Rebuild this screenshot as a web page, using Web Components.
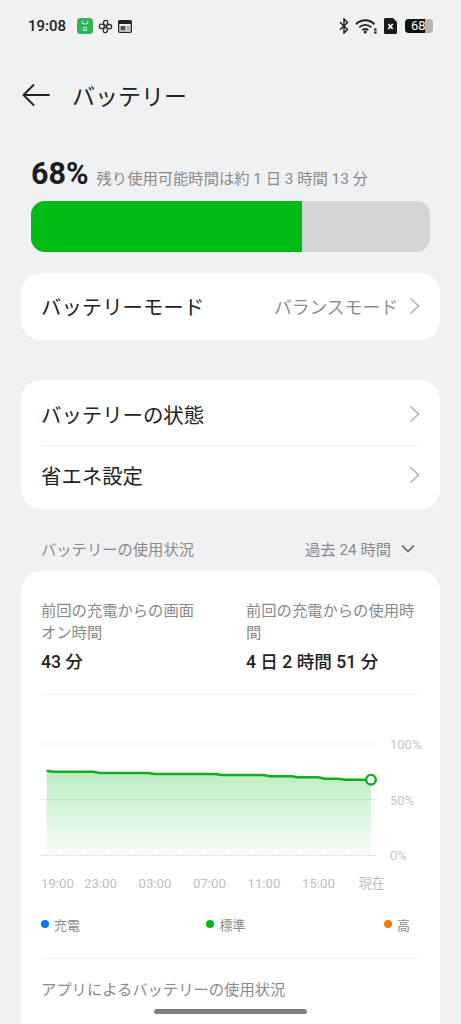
<!DOCTYPE html>
<html lang="ja">
<head>
<meta charset="utf-8">
<title>バッテリー</title>
<style>
  html, body { margin: 0; height: 1024px; overflow: hidden; background: #f0f1f3; }
  body { font-family: Roboto, "Noto Sans CJK JP", sans-serif; color: #222; position: relative; }
</style>
</head>
<body>
<status-bar></status-bar>
<app-header>バッテリー</app-header>
<battery-summary level="68" remain="残り使用可能時間は約 1 日 3 時間 13 分"></battery-summary>

<setting-card style="margin-top:21px">
  <setting-row value="バランスモード" height="67" style="--row-pad:0 0 1px">バッテリーモード</setting-row>
</setting-card>

<setting-card style="margin-top:40px">
  <setting-row height="65" style="--row-pad:2px 0 0">バッテリーの状態</setting-row>
  <setting-row height="64" style="--row-pad:0 0 6px" divider>省エネ設定</setting-row>
</setting-card>

<usage-header range="過去 24 時間">バッテリーの使用状況</usage-header>

<setting-card style="--card-radius:20px 20px 0 0">
  <usage-stats></usage-stats>
  <battery-chart></battery-chart>
  <chart-legend></chart-legend>
  <app-usage>アプリによるバッテリーの使用状況</app-usage>
</setting-card>

<home-bar></home-bar>

<script>
// STATUS BAR
class StatusBar extends HTMLElement {
  constructor() {
    super();
    this.attachShadow({ mode: "open" });
    this.shadowRoot.innerHTML = `
      <style>
        :host { display: flex; align-items: center; height: 52px; padding: 0 28px; box-sizing: border-box; }
        .time { font-size: 15px; font-weight: 500; color: #222; margin-right: 11px; }
        svg { display: block; flex: none; }
        .spacer { flex: 1; }
        .left { display: flex; align-items: center; gap: 5px; }
        .right { display: flex; align-items: center; }
        .batt { position: relative; width: 28px; height: 14px; margin-left: 8px; border-radius: 4px;
          background: #b5b5b5; overflow: hidden; }
        .batt i { position: absolute; left: 0; top: 0; bottom: 0; width: 20px; background: #111; }
        .batt span { position: absolute; left: 6px; top: 0; font-size: 13px; line-height: 14px; font-weight: 400; color: #fff; }
      </style>
      <span class="time">19:08</span>
      <div class="left">
        <svg width="16" height="16" viewBox="0 0 16 16">
          <rect width="16" height="16" rx="3.500" fill="#2fb457"/>
          <path d="M5 3l.6 2.500q2.400 1.200 4.800 0L11 3" fill="none" stroke="#d9f3e0" stroke-width="1"/>
          <path d="M6 9h1.600v1.600H6zM8.500 9h1.600v1.600H8.500zM6 11.300h1.600v1.600H6zM8.500 11.300h1.600v1.600H8.500z" fill="#d9f3e0"/>
        </svg>
        <svg width="15" height="15" viewBox="0 0 15 15" fill="none" stroke="#222" stroke-width="1.200">
          <circle cx="7.500" cy="7.500" r="1.200"/>
          <path d="M7 6.300C5 5.600 4.600 1.600 7.600 1.300c2.600-.2 3 2.600 1 4.400"/>
          <path d="M8.700 7c.7-2 4.700-2.400 5 .6.2 2.600-2.600 3-4.400 1"/>
          <path d="M8 8.700c2 .7 2.400 4.700-.6 5-2.600.2-3-2.600-1-4.400"/>
          <path d="M6.300 8c-.7 2-4.700 2.400-5-.6-.2-2.600 2.600-3 4.400-1"/>
        </svg>
        <svg width="14" height="13" viewBox="0 0 14 13">
          <rect x=".7" y=".7" width="12.600" height="11.600" rx="1" fill="none" stroke="#222" stroke-width="1.300"/>
          <path d="M.7 1h12.600v3H.7z" fill="#222"/>
          <path d="M2.500 6h5v4.500h-5z" fill="#555"/>
          <path d="M8.800 6h3v4.500h-3z" fill="#aaa"/>
        </svg>
      </div>
      <span class="spacer"></span>
      <div class="right">
        <svg width="10" height="16" viewBox="0 0 10 16" fill="none" stroke="#222" stroke-width="1.500">
          <path d="M1 4.200l7.500 7.300L5 15V1l3.500 3.500L1 11.800"/>
        </svg>
        <svg width="23" height="16" viewBox="0 0 23 16" fill="none" stroke="#222" stroke-width="1.900" style="margin-left:6px">
          <path d="M1 6.200C6.500 1 14 1 19.500 6.200"/>
          <path d="M4.200 9.400c3.700-3.200 8.400-3.200 12 0"/>
          <path d="M7.300 12.200c2-1.500 4-1.500 5.900 0"/>
          <circle cx="10.200" cy="14" r="1.500" fill="#222" stroke="none"/>
          <path d="M19 10.500h2.600v2H19zM19 13.600h2.600v2H19z" fill="#222" stroke="none"/>
        </svg>
        <svg width="13" height="16" viewBox="0 0 13 16" style="margin-left:6px">
          <path d="M1.500 0H9l4 4v10.500a1.500 1.500 0 0 1-1.500 1.500h-10A1.500 1.500 0 0 1 0 14.500V1.500A1.500 1.500 0 0 1 1.500 0z" fill="#1a1a1a"/>
          <path d="M4.300 6l4.400 5M8.700 6l-4.400 5" stroke="#fff" stroke-width="1.700"/>
        </svg>
        <div class="batt"><i></i><span>68</span></div>
      </div>
    `;
  }
}
customElements.define("status-bar", StatusBar);

// HEADER
class AppHeader extends HTMLElement {
  constructor() {
    super();
    this.attachShadow({ mode: "open" });
    this.shadowRoot.innerHTML = `
      <style>
        :host { display: flex; align-items: center; height: 44px; margin-top: 21px; padding-left: 22px; }
        svg { display: block; margin-right: 22px; }
        .title { font-size: 23px; color: #222; }
      </style>
      <svg width="28" height="24" viewBox="0 0 28 24" fill="none" stroke="#222" stroke-width="1.900" stroke-linecap="round" stroke-linejoin="round">
        <path d="M1.500 12H27M11.500 2L1.500 12l10 10"/>
      </svg>
      <span class="title"><slot></slot></span>
    `;
  }
}
customElements.define("app-header", AppHeader);

// BATTERY LEVEL
class BatterySummary extends HTMLElement {
  constructor() {
    super();
    this.attachShadow({ mode: "open" });
    const level = this.getAttribute("level");
    this.shadowRoot.innerHTML = `
      <style>
        :host { display: block; margin: 33px 31px 0; }
        .top { display: flex; align-items: baseline; height: 49px; }
        .pct { font-size: 30.500px; font-weight: 700; color: #1c1c1c; margin-right: 8px; line-height: 47px; }
        .remain { font-size: 15.300px; color: #8a8a8a; white-space: nowrap; }
        .bar { height: 51px; margin-top: 2px; border-radius: 14px; background: #d3d5d7; overflow: hidden; }
        .fill { height: 100%; background: #00bb13; }
      </style>
      <div class="top"><span class="pct">${level}%</span><span class="remain">${this.getAttribute("remain")}</span></div>
      <div class="bar"><div class="fill" style="width:${level}%"></div></div>
    `;
  }
}
customElements.define("battery-summary", BatterySummary);

// WHITE CARD
class SettingCard extends HTMLElement {
  constructor() {
    super();
    this.attachShadow({ mode: "open" });
    this.shadowRoot.innerHTML = `
      <style>
        :host { display: block; margin: 0 21px; background: #fff; border-radius: var(--card-radius, 20px); }
      </style>
      <slot></slot>
    `;
  }
}
customElements.define("setting-card", SettingCard);

class SettingRow extends HTMLElement {
  constructor() {
    super();
    this.attachShadow({ mode: "open" });
    const value = this.getAttribute("value");
    this.shadowRoot.innerHTML = `
      <style>
        :host { display: block; padding: 0 20px; }
        .row { display: flex; align-items: center; box-sizing: border-box; height: ${this.getAttribute("height")}px; padding: var(--row-pad, 0); }
        .row.line { border-top: 1px solid #f1f1f1; }
        .label { flex: 1; font-size: 20.400px; color: #222; }
        .value { font-size: 17.800px; color: #8e8e8e; margin-right: 11px; }
        svg { display: block; }
      </style>
      <div class="row ${this.hasAttribute("divider") ? "line" : ""}">
        <span class="label"><slot></slot></span>
        ${value ? `<span class="value">${value}</span>` : ""}
        <svg width="11" height="18" viewBox="0 0 11 18" fill="none" stroke="#b4b4b4" stroke-width="1.600">
          <path d="M1.500 1.500L9.500 9l-8 7.500"/>
        </svg>
      </div>
    `;
  }
}
customElements.define("setting-row", SettingRow);

// USAGE SECTION
class UsageHeader extends HTMLElement {
  constructor() {
    super();
    this.attachShadow({ mode: "open" });
    this.shadowRoot.innerHTML = `
      <style>
        :host { display: flex; align-items: center; box-sizing: border-box; height: 62px; padding: 16px 46px 0 41px; font-size: 15.300px; color: #8a8a8a; }
        .label { flex: 1; }
        svg { display: block; margin-left: 10px; }
      </style>
      <span class="label"><slot></slot></span>
      <span>${this.getAttribute("range")}</span>
      <svg width="14" height="9" viewBox="0 0 14 9" fill="none" stroke="#777" stroke-width="1.800">
        <path d="M1 1.500l6 6 6-6"/>
      </svg>
    `;
  }
}
customElements.define("usage-header", UsageHeader);

class UsageStats extends HTMLElement {
  constructor() {
    super();
    this.attachShadow({ mode: "open" });
    this.shadowRoot.innerHTML = `
      <style>
        :host { display: grid; grid-template-columns: 205px 175px; margin: 0 20px; padding: 29px 0 20px;
          border-bottom: 1px solid #f3f3f3; }
        .label { font-size: 15.300px; line-height: 22px; color: #8a8a8a; height: 44px; }
        .value { font-size: 17.600px; font-weight: 500; line-height: 24px; margin-top: 6px; color: #222; }
      </style>
      <div>
        <div class="label">前回の充電からの画面<br>オン時間</div>
        <div class="value">43 分</div>
      </div>
      <div>
        <div class="label">前回の充電からの使用時<br>間</div>
        <div class="value">4 日 2 時間 51 分</div>
      </div>
    `;
  }
}
customElements.define("usage-stats", UsageStats);

// CHART
class BatteryChart extends HTMLElement {
  constructor() {
    super();
    this.attachShadow({ mode: "open" });
    const points = "46.700,770.700 53,771.700 93,771.700 100,773 148,773 155,774 215,774 222,775 263,775 270,776.300 292,776.300 297,777.300 318,777.300 325,778.700 338,778.700 345,779.700 371,779.700";
    this.shadowRoot.innerHTML = `
      <style>
        :host { display: block; margin: 42px 0 0 20px; }
        .plot { display: grid; grid-template-columns: 349px auto; }
        svg { display: block; }
        .ylabels { display: flex; flex-direction: column; justify-content: space-between; height: 127px; font-size: 13px; line-height: 16px; color: #c6c6c6; }
        .xlabels { display: flex; margin-top: 12px; font-size: 13.200px; line-height: 16px; color: #c0c0c0; }
        .xlabels span { width: 54.500px; flex: none; }
        .xlabels span:first-child { width: 43px; }
      </style>
      <div class="plot">
        <svg width="349" height="127" viewBox="41 737 349 127">
          <defs>
            <linearGradient id="area" x1="0" y1="0" x2="0" y2="1">
              <stop offset="0" stop-color="#00bb13" stop-opacity=".26"/>
              <stop offset="1" stop-color="#00bb13" stop-opacity=".03"/>
            </linearGradient>
          </defs>
          <path d="M41 744H376" stroke="#f0f0f0" stroke-width="1"/>
          <path d="M41 799.500H376" stroke="#e8e8e8" stroke-width="1"/>
          <polygon points="46.700,855 ${points} 371,855" fill="url(#area)"/>
          <path d="M41 855.500H376" stroke="#cfcfcf" stroke-width="1" stroke-dasharray="1.500 1.500"/>
          <polyline points="${points}" fill="none" stroke="#0fae25" stroke-width="2.400"/>
          <circle cx="371" cy="779.700" r="4.800" fill="#fff" stroke="#0fae25" stroke-width="2.400"/>
        </svg>
        <div class="ylabels"><span>100%</span><span>50%</span><span>0%</span></div>
      </div>
      <div class="xlabels">
        <span>19:00</span><span>23:00</span><span>03:00</span><span>07:00</span><span>11:00</span><span>15:00</span><span style="margin-left:2px">現在</span>
      </div>
    `;
  }
}
customElements.define("battery-chart", BatteryChart);

class ChartLegend extends HTMLElement {
  constructor() {
    super();
    this.attachShadow({ mode: "open" });
    this.shadowRoot.innerHTML = `
      <style>
        :host { display: flex; justify-content: space-between; height: 67px; align-items: center; margin: 0 20px; padding: 0 10px 2px 0;
          box-sizing: border-box; border-bottom: 1px solid #f3f3f3; font-size: 13px; color: #8a8a8a; }
        .item { display: flex; align-items: center; gap: 5px; }
        .mid { margin-right: 12px; }
        i { width: 8px; height: 8px; border-radius: 50%; }
      </style>
      <span class="item"><i style="background:#0a78f0"></i>充電</span>
      <span class="item mid"><i style="background:#00bb13"></i>標準</span>
      <span class="item"><i style="background:#f57a0a"></i>高</span>
    `;
  }
}
customElements.define("chart-legend", ChartLegend);

class AppUsage extends HTMLElement {
  constructor() {
    super();
    this.attachShadow({ mode: "open" });
    this.shadowRoot.innerHTML = `
      <style>
        :host { display: block; padding: 19px 20px 23px; font-size: 15.300px; line-height: 24px; color: #8a8a8a; }
      </style>
      <slot></slot>
    `;
  }
}
customElements.define("app-usage", AppUsage);

// HOME INDICATOR (lies over the page)
class HomeBar extends HTMLElement {
  constructor() {
    super();
    this.attachShadow({ mode: "open" });
    this.shadowRoot.innerHTML = `
      <style>
        :host { position: absolute; left: 154px; top: 1009px; width: 153px; height: 5px; border-radius: 3px; background: #7f7f7f; }
      </style>
    `;
  }
}
customElements.define("home-bar", HomeBar);
</script>
</body>
</html>
